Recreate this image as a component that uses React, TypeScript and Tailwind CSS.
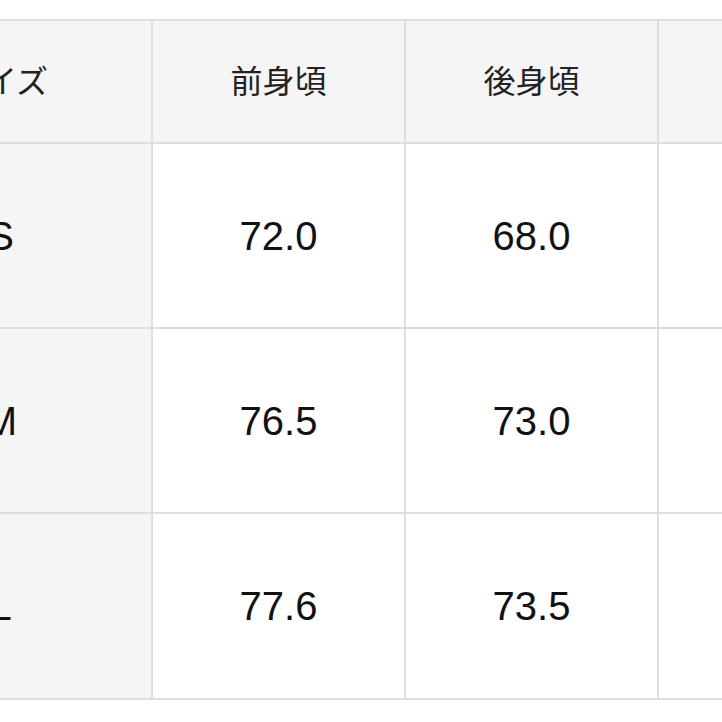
import React from "react";

const rows = [
  ["S", "72.0", "68.0", ""],
  ["M", "76.5", "73.0", ""],
  ["L", "77.6", "73.5", ""],
];

export default function App() {
  return (
    <div className="w-[722px] h-[722px] bg-white overflow-hidden pt-[19px]">
      <div
        className="ml-[-150px] w-[1060px] grid grid-cols-[301px_251px_251px_251px] grid-rows-[121px_183px_183px_184px] gap-[2px] bg-[#dddee3] py-[2px]"
      >
        <div className="bg-[#f5f5f5] flex items-center justify-center pb-[5px] text-[32px] text-[#222] font-['Noto_Sans_CJK_JP',sans-serif]">
          サイズ
        </div>
        <div className="bg-[#f5f5f5] flex items-center justify-center pb-[5px] text-[32px] text-[#222] font-['Noto_Sans_CJK_JP',sans-serif]">
          前身頃
        </div>
        <div className="bg-[#f5f5f5] flex items-center justify-center pb-[5px] text-[32px] text-[#222] font-['Noto_Sans_CJK_JP',sans-serif]">
          後身頃
        </div>
        <div className="bg-[#f5f5f5]"></div>
        {rows.map((r) => (
          <React.Fragment key={r[0]}>
            <div className="bg-[#f5f5f5] flex items-center justify-center text-[40px] text-[#111] font-['Liberation_Sans',sans-serif]">
              {r[0]}
            </div>
            <div className="bg-white flex items-center justify-center text-[40px] text-[#111] font-['Liberation_Sans',sans-serif]">
              {r[1]}
            </div>
            <div className="bg-white flex items-center justify-center text-[40px] text-[#111] font-['Liberation_Sans',sans-serif]">
              {r[2]}
            </div>
            <div className="bg-white"></div>
          </React.Fragment>
        ))}
      </div>
    </div>
  );
}
